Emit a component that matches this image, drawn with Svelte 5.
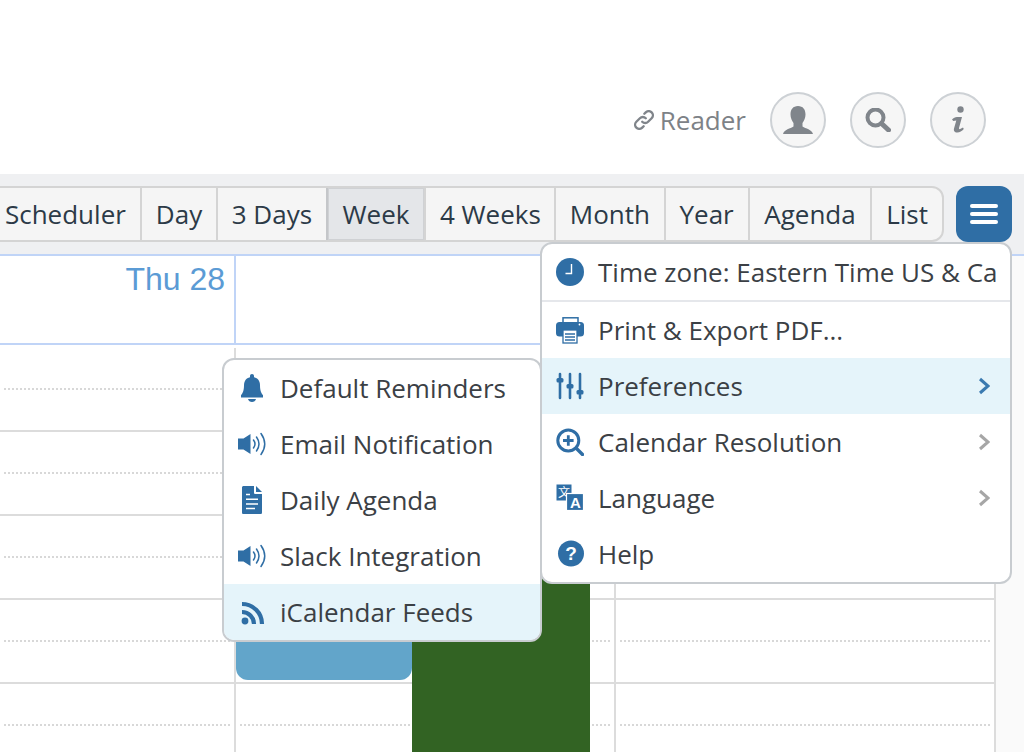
<script>
  const views = [
    { name: 'Scheduler' },
    { name: 'Day' },
    { name: '3 Days', tight: true },
    { name: 'Week', active: true },
    { name: '4 Weeks', tight: true },
    { name: 'Month', tight: true },
    { name: 'Year' },
    { name: 'Agenda', wide: true },
    { name: 'List' }
  ];
  const slots = [0, 1, 2, 3, 4];
  const mainMenu = [
    { icon: 'print', label: 'Print & Export PDF...' },
    { icon: 'sliders', label: 'Preferences', more: true, hover: true },
    { icon: 'zoom', label: 'Calendar Resolution', more: true },
    { icon: 'lang', label: 'Language', more: true },
    { icon: 'help', label: 'Help' }
  ];
  const subMenu = [
    { icon: 'bell', label: 'Default Reminders' },
    { icon: 'speaker', label: 'Email Notification' },
    { icon: 'doc', label: 'Daily Agenda' },
    { icon: 'speaker', label: 'Slack Integration' },
    { icon: 'rss', label: 'iCalendar Feeds', hover: true }
  ];
</script>

{#snippet icon(name)}
  <svg class="icon" viewBox="0 0 28 28" width="28" height="28">
    {#if name === 'clock'}
      <circle cx="14" cy="14" r="14" fill="#2f6ea5" />
      <path d="M15.500 6v9.500H9.500" fill="none" stroke="#fff" stroke-width="1.400" />
    {:else if name === 'print'}
      <rect x="7" y="1.800" width="15" height="7" fill="none" stroke="#2f6ea5" stroke-width="1.500" />
      <rect x="0" y="6" width="28" height="14.500" rx="3.500" fill="#2f6ea5" />
      <circle cx="23.500" cy="8.500" r="0.900" fill="#fff" />
      <rect x="7" y="14" width="14" height="13" fill="#fff" stroke="#2f6ea5" stroke-width="1.300" />
      <path d="M9 18h10M9 21h10M9 24h10" stroke="#2f6ea5" stroke-width="1.600" />
    {:else if name === 'sliders'}
      <path d="M4 2v24M14 2v24M24 2v24" stroke="#2f6ea5" stroke-width="2.600" stroke-linecap="round" />
      <rect x="0.500" y="6" width="7" height="4.600" rx="1.500" fill="#2f6ea5" />
      <rect x="10.500" y="12" width="7" height="4.600" rx="1.500" fill="#2f6ea5" />
      <rect x="20.500" y="18" width="7" height="4.600" rx="1.500" fill="#2f6ea5" />
    {:else if name === 'zoom'}
      <circle cx="12.300" cy="12.500" r="10.500" fill="none" stroke="#2f6ea5" stroke-width="3" />
      <path d="M7 12.500h10.600M12.300 7.200v10.600" stroke="#2f6ea5" stroke-width="2.800" />
      <path d="M20.500 20.500l6 6" stroke="#2f6ea5" stroke-width="3.400" stroke-linecap="round" />
    {:else if name === 'lang'}
      <rect x="0.500" y="0.500" width="15" height="16" fill="#2f6ea5" />
      <text class="lang-a" x="2" y="12.500">文</text>
      <rect x="10.500" y="9.500" width="17" height="17" fill="#2f6ea5" stroke="#fff" stroke-width="1.200" />
      <text class="lang-b" x="14" y="23.500">A</text>
    {:else if name === 'help'}
      <circle cx="15" cy="13.500" r="13" fill="#2f6ea5" />
      <text class="help-q" x="15" y="20">?</text>
    {:else if name === 'bell'}
      <path d="M14 0c1.200 0 2 .8 2 2v1.200c4 .9 6 4 6 8 0 6 1.500 8 3 10V23.500H3V21.200c1.500-2 3-4 3-10 0-4 2-7.100 6-8V2c0-1.200.8-2 2-2z" fill="#2f6ea5" />
      <path d="M10 25h8c-.5 2-2 3-4 3s-3.500-1-4-3z" fill="#2f6ea5" />
    {:else if name === 'speaker'}
      <path d="M0 8.500h5.500L12.500 4v20l-7-4.500H0z" fill="#2f6ea5" />
      <path d="M15.500 10q3 4 0 8M18.500 7q5 7 0 14M23 3.500q7.500 10.500 0 21" fill="none" stroke="#2f6ea5" stroke-width="1.500" stroke-linecap="round" />
    {:else if name === 'doc'}
      <path d="M6 0h10v6.500c0 1 .6 1.500 1.500 1.500H24v18.500c0 1-.6 1.500-1.500 1.500h-17C4.600 28 4 27.500 4 26.500V1.500C4 .5 4.600 0 6 0z" fill="#2f6ea5" />
      <path d="M18 0l6 6h-6z" fill="#2f6ea5" />
      <path d="M8 8.500h4M8 13.300h12M8 18h12M8 22.500h9" stroke="#fff" stroke-width="1.500" />
    {:else if name === 'rss'}
      <circle cx="7" cy="23" r="3.400" fill="#2f6ea5" />
      <path d="M4 14a12 12 0 0 1 12 12M4 6a20 20 0 0 1 20 20" fill="none" stroke="#2f6ea5" stroke-width="4.200" />
    {/if}
  </svg>
{/snippet}

{#snippet chevron()}
  <svg class="chevron" viewBox="0 0 12 18" width="12" height="18">
    <path d="M2 2l8 7-8 7" fill="none" stroke="currentColor" stroke-width="3" />
  </svg>
{/snippet}

{#snippet row(item)}
  <div class="row" class:hover={item.hover}>
    {@render icon(item.icon)}
    <span class="label">{item.label}</span>
    {#if item.more}{@render chevron()}{/if}
  </div>
{/snippet}

<div class="page">
  <header class="top">
    <span class="reader">
      <svg viewBox="1.500 1.500 17 17" width="20" height="20">
        <path d="M8.500 11.500a3.500 3.500 0 0 0 5 0l3-3a3.500 3.500 0 0 0-5-5l-1.200 1.200M11.500 8.500a3.500 3.500 0 0 0-5 0l-3 3a3.500 3.500 0 0 0 5 5l1.200-1.200" fill="none" stroke="#80858b" stroke-width="2" stroke-linecap="round" />
      </svg>
      Reader
    </span>
    <span class="round">
      <svg viewBox="0 0 30 28" width="30" height="28">
        <path d="M15 0c5 0 7.500 3.500 7.500 8.500 0 3.500-1.500 6.500-3 8.500v3.500c3 2 9.500 3 10.500 7.500H0c1-4.500 7.500-5.500 10.500-7.500V17c-1.500-2-3-5-3-8.500C7.500 3.500 10 0 15 0z" fill="#80858b" />
      </svg>
    </span>
    <span class="round">
      <svg viewBox="0 0 26 24" width="26" height="24">
        <circle cx="10.500" cy="9.500" r="8" fill="none" stroke="#80858b" stroke-width="4" />
        <path d="M16.500 15.500l7 6.500" stroke="#80858b" stroke-width="5" stroke-linecap="round" />
      </svg>
    </span>
    <span class="round">
      <svg viewBox="0 0 14 28" width="14" height="28">
        <circle cx="9.500" cy="3.500" r="3.200" fill="#80858b" />
        <path d="M1 13.500c1.500-1.500 3-2.500 5-2.500h5l-3 11c-.2 1 .5 1.400 1.200 1l2.800-1.500.8 1.500c-2 2-4 3.500-6.500 3.500-3 0-3.800-1.800-3.300-4l2.300-8-3 .5z" fill="#80858b" />
      </svg>
    </span>
  </header>

  <div class="toolbar">
    <div class="views">
      {#each views as view}
        <span class="view" class:active={view.active} class:tight={view.tight} class:wide={view.wide}>{view.name}</span>
      {/each}
    </div>
    <div class="burger"><i></i><i></i><i></i></div>
  </div>

  <div class="calendar">
    <div class="head">
      <div class="day first">Thu 28</div>
      <div class="day"></div>
      <div class="day"></div>
    </div>
    <div class="cols">
      {#each [0, 1, 2] as col}
        <div class="col">
          {#each slots as s}
            <div class="slot"><div class="half"></div></div>
          {/each}
          {#if col === 1}
            <div class="event blue"></div>
            <div class="event green"></div>
          {/if}
        </div>
      {/each}
    </div>
  </div>

  <div class="menu sub">
    {#each subMenu as item}
      {@render row(item)}
    {/each}
  </div>

  <div class="menu main">
    {@render row({ icon: 'clock', label: 'Time zone: Eastern Time US & Ca' })}
    <div class="divider"></div>
    {#each mainMenu as item}
      {@render row(item)}
    {/each}
  </div>
</div>

<style>
  :global(body) {
    margin: 0;
    background: #fff;
  }

  .page {
    position: relative;
    width: 1024px;
    height: 752px;
    overflow: hidden;
    font-family: "Open Sans", "Liberation Sans", sans-serif;
    font-size: 26px;
  }

  .top {
    height: 174px;
    box-sizing: border-box;
    display: flex;
    justify-content: flex-end;
    align-items: center;
    gap: 24px;
    padding: 66px 38px 0 0;
  }

  .reader {
    display: flex;
    align-items: center;
    gap: 6px;
    color: #7d8287;
  }

  .round {
    width: 56px;
    height: 56px;
    box-sizing: border-box;
    border: 2px solid #cdd1d5;
    border-radius: 50%;
    background: #f6f6f6;
    display: flex;
    align-items: center;
    justify-content: center;
  }

  .toolbar {
    height: 80px;
    box-sizing: border-box;
    background: #eff0f2;
    display: flex;
    justify-content: flex-end;
    gap: 12px;
    padding: 12px 12px 0 0;
  }

  .views {
    height: 56px;
    box-sizing: border-box;
    display: flex;
    flex-shrink: 0;
    background: #f5f5f5;
    border: 2px solid #d4d4d4;
    border-radius: 0 12px 12px 0;
    color: #2c3a47;
  }

  .view {
    padding: 0 14px;
    line-height: 52px;
    border-left: 2px solid #d4d4d4;
    white-space: nowrap;
  }

  .view.tight {
    padding: 0 13.500px;
  }

  .view.wide {
    padding: 0 14.500px;
  }

  .view.active {
    padding: 0 15px;
    background: #e4e6e9;
    border-left-color: #c4c6c9;
    box-shadow: inset 0 0 0 1px #cfd1d4;
  }

  .burger {
    width: 56px;
    height: 56px;
    box-sizing: border-box;
    flex-shrink: 0;
    background: #2f6ea5;
    border-radius: 12px;
    display: flex;
    flex-direction: column;
    justify-content: center;
    align-items: center;
    gap: 4px;
  }

  .burger i {
    display: block;
    width: 28px;
    height: 4px;
    border-radius: 2px;
    background: #fff;
  }

  .calendar {
    border-top: 2px solid #c0d4f7;
    background: #fafafa;
    height: 498px;
  }

  .head {
    width: 996px;
    height: 89px;
    box-sizing: border-box;
    display: grid;
    grid-template-columns: 236px 380px 380px;
    background: #fff;
    border-bottom: 2px solid #c0d4f7;
    box-shadow: 0 1px 0 #e6e6e6;
  }

  .day {
    border-right: 2px solid #c0d4f7;
    text-align: right;
    padding-right: 9px;
    font-family: "Liberation Sans", sans-serif;
    font-size: 32px;
    line-height: 46px;
    color: #5b9bd5;
  }

  .cols {
    width: 996px;
    display: grid;
    grid-template-columns: 236px 380px 380px;
    background: #fff;
    padding-top: 3px;
  }

  .col {
    position: relative;
    box-sizing: border-box;
    border-right: 2px solid #dcdcdc;
  }

  .slot {
    height: 84px;
    box-sizing: border-box;
    border-bottom: 2px solid #dcdcdc;
  }

  .half {
    height: 42px;
    box-sizing: border-box;
    margin: 0 4px;
    border-bottom: 2px dotted #d8d8d8;
  }

  .event {
    position: absolute;
    top: 72px;
  }

  .event.blue {
    left: 0;
    width: 176px;
    height: 260px;
    background: #62a5ca;
    border-radius: 0 0 12px 12px;
  }

  .event.green {
    left: 176px;
    width: 178px;
    height: 400px;
    background: #326323;
  }

  .menu {
    position: absolute;
    box-sizing: border-box;
    background: #fff;
    border: 2px solid #c8ccd0;
    border-radius: 12px;
    overflow: hidden;
    color: #3b4045;
  }

  .menu.main {
    left: 540px;
    top: 242px;
    width: 472px;
    height: 342px;
  }

  .menu.sub {
    left: 222px;
    top: 358px;
    width: 320px;
    height: 284px;
  }

  .row {
    height: 56px;
    display: flex;
    align-items: center;
    gap: 14px;
    padding-left: 14px;
    white-space: nowrap;
  }

  .row.hover {
    background: #e5f4fa;
  }

  .icon {
    flex-shrink: 0;
  }

  .label {
    flex: 1;
  }

  .chevron {
    margin-right: 20px;
    color: #a6a6a6;
  }

  .row.hover .chevron {
    color: #3a7ab0;
  }

  .divider {
    height: 2px;
    background: #e5e7eb;
  }

  .lang-a {
    font-family: "Noto Sans CJK SC", sans-serif;
    font-size: 12px;
    fill: #fff;
  }

  .lang-b {
    font-family: "Liberation Sans", sans-serif;
    font-weight: bold;
    font-size: 15px;
    fill: #fff;
  }

  .help-q {
    font-family: "Liberation Sans", sans-serif;
    font-weight: bold;
    font-size: 19px;
    text-anchor: middle;
    fill: #fff;
  }
</style>
